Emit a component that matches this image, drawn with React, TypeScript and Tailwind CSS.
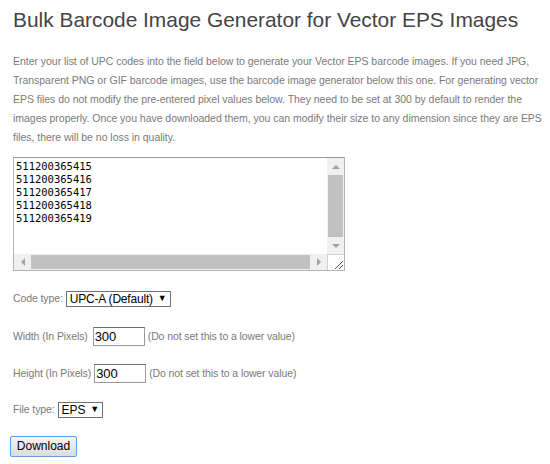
import React from "react";

const codes = ["511200365415", "511200365416", "511200365417", "511200365418", "511200365419"];

function Arrow({ dir }: { dir: "up" | "down" | "left" | "right" }) {
  const pts =
    dir === "up"
      ? "0,5 4,1 8,5"
      : dir === "down"
      ? "0,1 8,1 4,5"
      : dir === "left"
      ? "5,0 5,8 1,4"
      : "1,0 1,8 5,4";
  const w = dir === "up" || dir === "down" ? 8 : 6;
  const h = dir === "up" || dir === "down" ? 6 : 8;
  return (
    <svg width={w} height={h} viewBox={`0 0 ${w} ${h}`}>
      <polygon points={pts} fill="#a3a3a3" />
    </svg>
  );
}

const sans = { fontFamily: '"Liberation Sans", Arial, sans-serif' };

export default function App() {
  return (
    <div className="w-[550px] h-[464px] bg-white overflow-hidden pl-[13px] pr-[5px]" style={sans}>
      <h1 className="text-[20.9px] leading-[26px] text-[#444] pt-[7px] whitespace-nowrap">
        Bulk Barcode Image Generator for Vector EPS Images
      </h1>
      <p className="mt-[19px] text-[10.5px] leading-[19px] tracking-[-0.03px] text-[#7a7a7a] whitespace-nowrap">
        Enter your list of UPC codes into the field below to generate your Vector EPS barcode images. If you need JPG,
        <br />
        Transparent PNG or GIF barcode images, use the barcode image generator below this one. For generating vector
        <br />
        EPS files do not modify the pre-entered pixel values below. They need to be set at 300 by default to render the
        <br />
        images properly. Once you have downloaded them, you can modify their size to any dimension since they are EPS
        <br />
        files, there will be no loss in quality.
      </p>

      {/* textarea */}
      <div className="mt-[10px] w-[332px] h-[114px] border border-[#b5b5b5] border-t-[#9a9a9a] flex flex-col bg-white">
        <div className="flex flex-1 min-h-0">
          <div
            className="flex-1 pl-[2px] pt-[2px] text-[10.5px] leading-[13px] text-black"
            style={{ fontFamily: '"DejaVu Sans Mono", "Liberation Mono", monospace' }}
          >
            {codes.map((c) => (
              <div key={c}>{c}</div>
            ))}
          </div>
          <div className="w-[17px] bg-[#f0f0f0] flex flex-col items-center">
            <div className="h-[17px] flex items-center justify-center">
              <Arrow dir="up" />
            </div>
            <div className="w-[15px] flex-1 bg-[#c1c1c1]" />
            <div className="h-[17px] flex items-center justify-center">
              <Arrow dir="down" />
            </div>
          </div>
        </div>
        <div className="flex h-[16px]">
          <div className="flex-1 bg-[#f0f0f0] flex items-center">
            <div className="w-[17px] flex items-center justify-center">
              <Arrow dir="left" />
            </div>
            <div className="flex-1 h-[14px] bg-[#c1c1c1]" />
            <div className="w-[17px] flex items-center justify-center">
              <Arrow dir="right" />
            </div>
          </div>
          <div className="w-[17px] bg-white border-l border-t border-[#d0d0d0] flex items-end justify-end">
            <svg width="12" height="12" viewBox="0 0 12 12">
              <line x1="11" y1="3" x2="3" y2="11" stroke="#555" strokeWidth="1" />
              <line x1="11" y1="7" x2="7" y2="11" stroke="#555" strokeWidth="1" />
            </svg>
          </div>
        </div>
      </div>

      {/* code type */}
      <div className="mt-[19px] flex items-center h-[17px] text-[10.5px] tracking-[-0.1px] text-[#7a7a7a] whitespace-nowrap">
        <span>Code type:</span>
        <div className="ml-[3px] h-[16px] border border-[#707070] px-[3px] flex items-center text-[12px] tracking-[-0.2px] text-black leading-none bg-white">
          <span>UPC-A (Default)</span>
          <span className="ml-[5px] text-[9px]">▼</span>
        </div>
      </div>

      {/* width */}
      <div className="mt-[20px] flex items-center h-[19px] text-[10.5px] tracking-[-0.1px] text-[#7a7a7a] whitespace-nowrap">
        <span>Width (In Pixels)</span>
        <input
          readOnly
          value="300"
          className="ml-[5px] w-[52px] h-[19px] border border-[#9a9a9a] border-t-[#707070] px-[1px] text-[13px] text-black outline-none"
          style={sans}
        />
        <span className="ml-[3px]">(Do not set this to a lower value)</span>
      </div>

      {/* height */}
      <div className="mt-[18px] flex items-center h-[19px] text-[10.5px] tracking-[-0.1px] text-[#7a7a7a] whitespace-nowrap">
        <span>Height (In Pixels)</span>
        <input
          readOnly
          value="300"
          className="ml-[3px] w-[52px] h-[19px] border border-[#9a9a9a] border-t-[#707070] px-[1px] text-[13px] text-black outline-none"
          style={sans}
        />
        <span className="ml-[3px]">(Do not set this to a lower value)</span>
      </div>

      {/* file type */}
      <div className="mt-[18px] flex items-center h-[17px] text-[10.5px] tracking-[-0.1px] text-[#7a7a7a] whitespace-nowrap">
        <span>File type:</span>
        <div className="ml-[3px] h-[16px] border border-[#707070] px-[3px] flex items-center text-[12px] text-black leading-none bg-white">
          <span>EPS</span>
          <span className="ml-[5px] text-[9px]">▼</span>
        </div>
      </div>

      {/* download */}
      <div className="mt-[15px]">
        <button
          className="ml-[-3px] h-[21px] w-[67px] border border-[#5f9fe0] rounded-[2px] bg-gradient-to-b from-[#f4f4f4] to-[#dcdcdc] text-[12px] text-black leading-none"
          style={sans}
        >
          Download
        </button>
      </div>
    </div>
  );
}
